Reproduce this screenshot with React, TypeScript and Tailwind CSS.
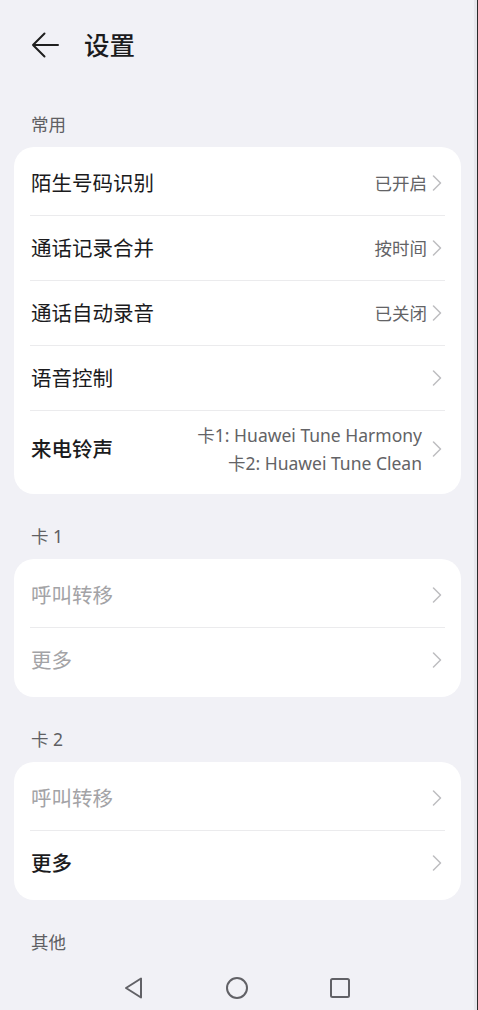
import React from 'react';

const font = 'font-["Noto_Sans","Noto_Sans_CJK_SC",sans-serif]';

type Row = {
  label: string;
  value?: string[];
  muted?: boolean;
  strong?: boolean;
};

const Chevron = () => (
  <svg width="10" height="16" viewBox="0 0 10 16" className="shrink-0">
    <path d="M1.5 1 L8.5 8 L1.5 15" fill="none" stroke="#bdbdc0" strokeWidth="1.5" strokeLinecap="round" strokeLinejoin="round" />
  </svg>
);

const SectionTitle = ({ text }: { text: string }) => (
  <div className="pl-[31px] pt-[32px] pb-[13px] text-[17.5px] leading-[20px] text-[#5f5f63]">{text}</div>
);

const Card = ({ rows, last = 5 }: { rows: Row[]; last?: number }) => (
  <div className="ml-[14px] mr-[17px] rounded-[20px] bg-white pt-[4px]" style={{ paddingBottom: last }}>
    {rows.map((row, i) => (
      <React.Fragment key={row.label + i}>
        {i > 0 && <div className="mx-[16px] h-px bg-[#ebebed]" />}
        <div
          className={`flex items-center justify-between pl-[17px] pr-[19px] ${
            row.value && row.value.length > 1 ? 'py-[10px]' : 'h-[64px]'
          }`}
        >
          <span
            className={`text-[20.5px] leading-[26px] ${
              row.muted ? 'text-[#a3a3a6]' : 'text-[#1b1b1d]'
            } ${row.strong ? 'font-medium' : ''}`}
          >
            {row.label}
          </span>
          <div className="flex items-center gap-[5px]">
            {row.value && (
              <div className={`flex flex-col items-end text-[17.5px] leading-[28px] text-[#636366] ${row.value.length > 1 ? 'mr-[5px]' : ''}`}>
                {row.value.map((v) => (
                  <span key={v}>{v}</span>
                ))}
              </div>
            )}
            <Chevron />
          </div>
        </div>
      </React.Fragment>
    ))}
  </div>
);

export default function App() {
  return (
    <div className={`relative flex h-[1010px] w-[478px] flex-col overflow-hidden bg-[#f1f1f6] ${font}`}>
      <div className="absolute right-0 top-0 h-full w-[4px] border-r border-[#2a2a2a] bg-[#e6e6eb]" />
      <div className="flex-1 overflow-hidden">
        {/* header */}
        <div className="flex h-[90px] items-center pl-[31px]">
          <svg width="28" height="26" viewBox="0 0 28 26" className="shrink-0">
            <path d="M2 13 H27 M13.5 1.5 L2 13 L13.5 24.5" fill="none" stroke="#1f1f1f" strokeWidth="2" strokeLinecap="round" strokeLinejoin="round" />
          </svg>
          <span className="ml-[25px] text-[25.5px] font-medium leading-[30px] text-[#1b1b1d]">设置</span>
        </div>

        <div className="pl-[31px] pt-[24px] pb-[13px] text-[17.5px] leading-[20px] text-[#5f5f63]">常用</div>
        <Card
          last={7}
          rows={[
            { label: '陌生号码识别', value: ['已开启'] },
            { label: '通话记录合并', value: ['按时间'] },
            { label: '通话自动录音', value: ['已关闭'] },
            { label: '语音控制' },
            { label: '来电铃声', value: ['卡1: Huawei Tune Harmony', '卡2: Huawei Tune Clean'], strong: true },
          ]}
        />

        <SectionTitle text="卡 1" />
        <Card rows={[{ label: '呼叫转移', muted: true }, { label: '更多', muted: true }]} />

        <SectionTitle text="卡 2" />
        <Card rows={[{ label: '呼叫转移', muted: true }, { label: '更多', strong: true }]} />

        <SectionTitle text="其他" />
      </div>

      {/* system nav */}
      <div className="flex h-[50px] shrink-0 items-center justify-center gap-[80px] pt-[5px] pr-[5px]">
        <svg width="22" height="24" viewBox="0 0 22 24">
          <path d="M18 2.5 V21.5 L3 12 Z" fill="none" stroke="#616166" strokeWidth="2" strokeLinejoin="round" />
        </svg>
        <svg width="24" height="24" viewBox="0 0 24 24">
          <circle cx="12" cy="12" r="10" fill="none" stroke="#616166" strokeWidth="2" />
        </svg>
        <svg width="22" height="22" viewBox="0 0 22 22">
          <rect x="2" y="2" width="18" height="18" rx="1.5" fill="none" stroke="#616166" strokeWidth="2" />
        </svg>
      </div>
    </div>
  );
}
